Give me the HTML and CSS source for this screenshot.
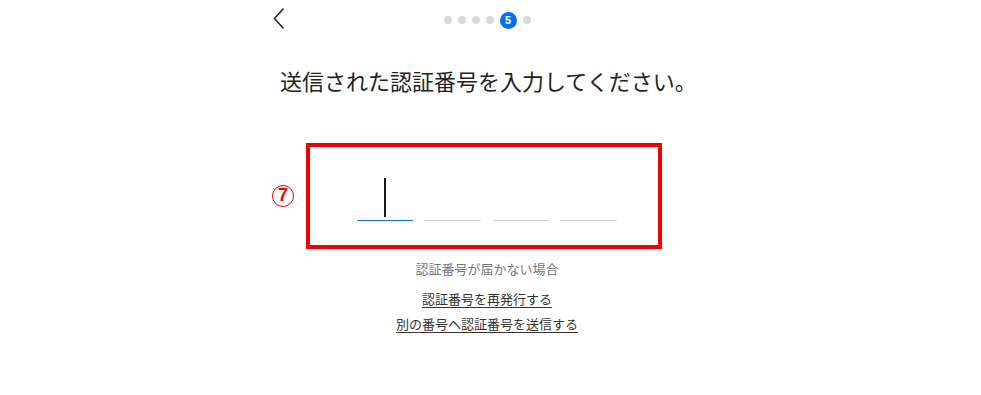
FILE: index.html
```html
<!DOCTYPE html>
<html lang="ja">
<head>
<meta charset="utf-8">
<title>認証番号入力</title>
<link rel="stylesheet" href="styles.css">
</head>
<body>
<div class="page">
  <div class="topbar">
    <div class="back">
      <svg width="12" height="24" viewBox="0 0 12 24" aria-hidden="true">
        <path d="M10.5 1.5 L1.5 11.5 L10.5 21.5" fill="none" stroke="#222" stroke-width="1.5"/>
      </svg>
    </div>
    <div class="steps">
      <span class="dot"></span>
      <span class="dot"></span>
      <span class="dot"></span>
      <span class="dot"></span>
      <span class="dot current">5</span>
      <span class="dot"></span>
    </div>
    <div></div>
  </div>

  <h1 class="title">送信された認証番号を入力してください。</h1>

  <div class="code-box">
    <span class="marker">7</span>
    <div class="cells">
      <div class="cell active"><span class="caret"></span></div>
      <div class="cell"></div>
      <div class="cell"></div>
      <div class="cell"></div>
    </div>
  </div>

  <p class="help">認証番号が届かない場合</p>
  <div class="links">
    <a class="link" href="#">認証番号を再発行する</a>
    <a class="link" href="#">別の番号へ認証番号を送信する</a>
  </div>
</div>
</body>
</html>
```

FILE: styles.css
```css
html, body {
  margin: 0;
  padding: 0;
  background: #fff;
}
body {
  font-family: "Noto Sans CJK JP", "Noto Sans", sans-serif;
  color: #222;
  padding-right: 7px;
}
.page {
  width: 436px;
  margin: 0 auto;
}
.topbar {
  height: 40px;
  display: grid;
  grid-template-columns: 1fr auto 1fr;
  align-items: center;
}
.back {
  padding-left: 4px;
  height: 40px;
  display: flex;
  align-items: flex-start;
}
.back svg {
  display: block;
  margin-top: 7px;
}
.steps {
  display: flex;
  align-items: center;
  gap: 6px;
}
.dot {
  width: 8px;
  height: 8px;
  border-radius: 50%;
  background: #d9d9d9;
}
.dot.current {
  width: 17px;
  height: 17px;
  background: #0a6fe8;
  color: #fff;
  font-family: "Roboto", "Liberation Sans", sans-serif;
  font-weight: 700;
  font-size: 11px;
  line-height: 17px;
  text-align: center;
}
.title {
  margin: 25px 0 0;
  padding-left: 11px;
  font-size: 22px;
  font-weight: 400;
  line-height: 30px;
  color: #222;
  white-space: nowrap;
}
.code-box {
  position: relative;
  margin: 48px 0 0 37px;
  width: 356px;
  height: 106px;
  box-sizing: border-box;
  border: 4px solid #f00000;
}
.marker {
  position: absolute;
  left: -38px;
  top: 38px;
  width: 22px;
  height: 22px;
  box-sizing: border-box;
  border: 1.5px solid #f00000;
  border-radius: 50%;
  color: #f00000;
  font-family: "Liberation Sans", sans-serif;
  font-weight: 700;
  font-size: 18px;
  line-height: 19px;
  text-align: center;
}
.cells {
  display: flex;
  gap: 12px;
  padding: 30px 0 0 47px;
}
.cell {
  width: 56px;
  height: 44px;
  box-sizing: border-box;
  border-bottom: 1px solid #cccccc;
  display: flex;
  justify-content: center;
  align-items: flex-start;
}
.cell.active {
  border-bottom-color: #1a6fd9;
}
.caret {
  display: block;
  width: 1.5px;
  height: 39px;
  margin-top: 1px;
  background: #1a1a1a;
}
.help {
  margin: 11px 0 0;
  text-align: center;
  font-size: 13px;
  line-height: 18px;
  color: #777;
}
.links {
  margin-top: 8px;
  display: flex;
  flex-direction: column;
  align-items: center;
}
.link {
  font-size: 13px;
  line-height: 25px;
  color: #333;
  text-decoration: underline;
  text-underline-offset: 3px;
}
```
